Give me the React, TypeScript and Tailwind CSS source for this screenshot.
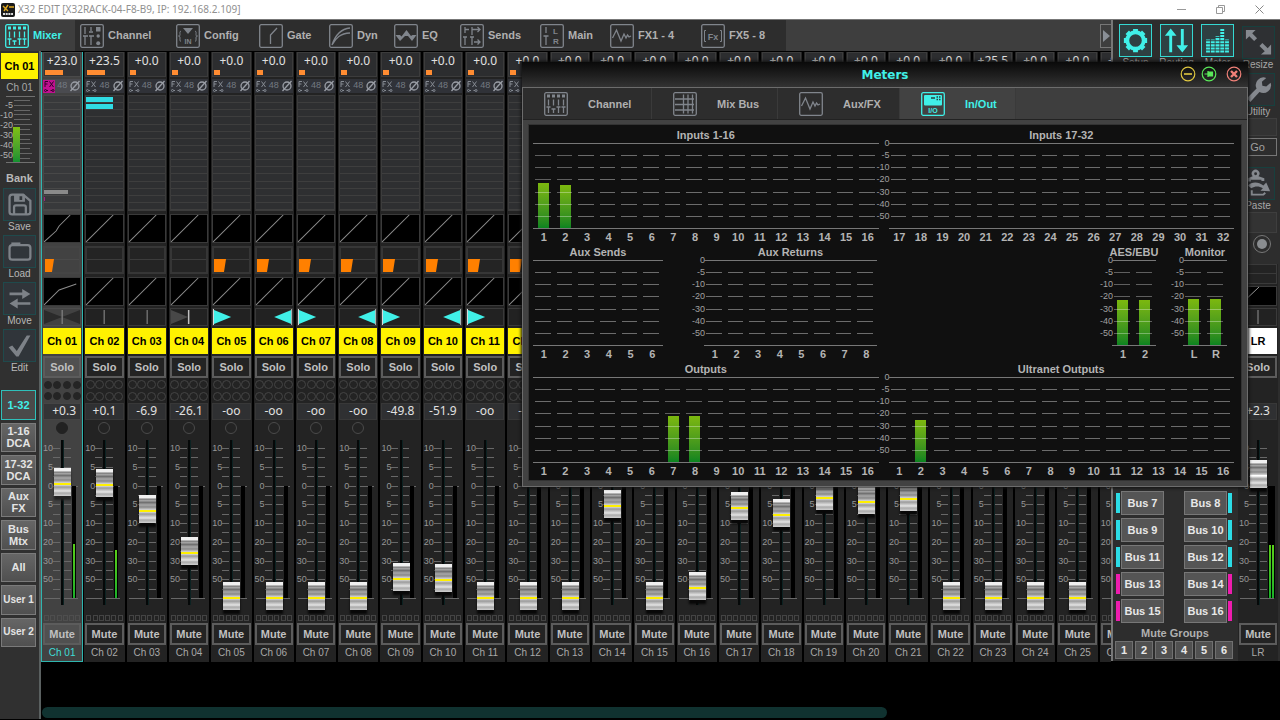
import { useState } from "react";
import type { ReactNode } from "react";
import clsx from "clsx";

type Pan = "center" | "bowtie" | "leftOfCenter" | "left" | "right" | "none";

interface Channel {
    name: string;
    gain: string;
    gainBar: number;
    level: number;
    readout: string;
    lowCut: number;
    pan: Pan;
    meter: number;
}

const OFF = -90;

// Fader law: [dB, travel in px from the bottom stop]
const FADER_LAW = [
    [-90, 0],
    [-50, 19],
    [-30, 38],
    [-20, 57],
    [-10, 75],
    [-5, 94],
    [0, 113],
    [5, 132],
    [10, 150],
];

const dbToTravel = (db: number) => {
    for (let i = 1; i < FADER_LAW.length; i++) {
        const [d0, t0] = FADER_LAW[i - 1];
        const [d1, t1] = FADER_LAW[i];
        if (db <= d1) return Math.round(t0 + ((db - d0) / (d1 - d0)) * (t1 - t0));
    }
    return 150;
};

const LEVELS: Record<number, number> = {
    1: 0.3, 2: 0.1, 3: -6.9, 4: -26.1, 9: -49.8, 10: -51.9, 14: -5.4,
    16: -69, 17: -6.1, 18: -7.9, 19: -3.5, 20: -4.6, 21: -3.8,
};

const formatDb = (db: number) => (db === OFF ? "-oo" : (db > 0 ? "+" : "") + db.toFixed(1));

const panOf = (n: number): Pan => {
    if (n === 1) return "bowtie";
    if (n === 4) return "leftOfCenter";
    if (n < 4) return "center";
    return n % 2 ? "left" : "right";
};

const CHANNELS: Channel[] = Array.from({ length: 26 }, (_, i) => {
    const n = i + 1;
    const level = LEVELS[n] ?? OFF;
    return {
        name: `Ch ${String(n).padStart(2, "0")}`,
        gain: n === 1 ? "+23.0" : n === 2 ? "+23.5" : n === 23 ? "+25.5" : "+0.0",
        gainBar: n <= 2 ? 18 : 6,
        level,
        readout: formatDb(level),
        lowCut: n === 1 ? 9 : n > 4 ? 12 : 0,
        pan: panOf(n),
        meter: n === 1 ? 54 : n === 2 ? 48 : 0,
    };
});

/* ---------- Icons ---------- */

function IconFrame({ children }: { children: ReactNode }) {
    return (
        <svg viewBox="0 0 24 24" className="w-6 h-6 shrink-0" fill="none" stroke="currentColor" strokeWidth="1.3">
            <rect x="0.7" y="0.7" width="22.6" height="22.6" rx="1.5" />
            {children}
        </svg>
    );
}

const MixerIcon = () => (
    <IconFrame>
        <path d="M3 4h3M8 4h3M13 4h3M18 4h3" strokeWidth="3" />
        <path d="M4.5 7.5v6M9.5 7.5v6M14.5 7.5v6M19.5 7.5v6M4.5 15v6M9.5 17v4M14.5 15v6M19.5 15v6M2.5 15h4M7.5 17h4M12.5 15h4M17.5 15h4" />
    </IconFrame>
);

const ChannelIcon = () => (
    <IconFrame>
        <path d="M5 3v7M11 3v4M5 12v9M11 12v9M3 12h5M9 12h5M9 8h4" />
        <rect x="16" y="3" width="4.5" height="4.5" fill="currentColor" stroke="none" />
        <circle cx="18.2" cy="12" r="1.7" fill="currentColor" stroke="none" />
        <circle cx="18.2" cy="19.3" r="2" fill="currentColor" stroke="none" />
    </IconFrame>
);

const ConfigIcon = () => (
    <IconFrame>
        <path d="M7 4h10l-5 6z" fill="currentColor" stroke="none" />
        <path d="M5 7c-1.5.5-1 2-1 3.500S3.500 12 2.500 12c1 0 1.500.5 1.500 2s-.5 3 1 3.500M19 7c1.500.5 1 2 1 3.500s.5 1.500 1.500 1.500c-1 0-1.500.5-1.500 2s.5 3-1 3.500" strokeWidth="1" />
        <text x="12" y="19.5" textAnchor="middle" fontSize="7" fill="currentColor" stroke="none" fontFamily="Liberation Sans, sans-serif">IN</text>
    </IconFrame>
);

const GateIcon = () => (
    <IconFrame>
        <path d="M11.5 20v-9L18 4" />
    </IconFrame>
);

const DynIcon = () => (
    <IconFrame>
        <path d="M3 21C6 12 11 5 21 4M3 21C7 14 11 9.500 21 9" />
    </IconFrame>
);

const EqIcon = () => (
    <IconFrame>
        <path d="M1.500 11h4.500l1.500 1.500L12.500 6l4.500 6 1.500-1H22.500L18 17l-4-5h-3l-5 5z" fill="currentColor" stroke="none" />
    </IconFrame>
);

const SendsIcon = () => (
    <IconFrame>
        <path d="M5 3v6M12 3v8M5 5.500h4M12 5.500h8M17.500 3l2.500 2.500L17.500 8M5 13v8M12 13v8M3 13h4M10 13h4M14 18h6M17.500 15.500L20 18l-2.500 2.500" />
    </IconFrame>
);

const MainIcon = () => (
    <IconFrame>
        <path d="M6 3v6M6 12v9M3.500 12h5" />
        <text x="15.5" y="10" textAnchor="middle" fontSize="8" fill="currentColor" stroke="none" fontFamily="Liberation Sans, sans-serif">L</text>
        <text x="16" y="20" textAnchor="middle" fontSize="8" fill="currentColor" stroke="none" fontFamily="Liberation Sans, sans-serif">R</text>
    </IconFrame>
);

const WaveIcon = () => (
    <IconFrame>
        <path d="M2.500 14l4-8 4.500 11 3-7 2 4 1.500-3 1.500 2 2-1" />
    </IconFrame>
);

const FxIcon = () => (
    <IconFrame>
        <path d="M5 6.500H3.500v11H5M19 6.500h1.500v11H19" strokeWidth="1" />
        <text x="12" y="15.5" textAnchor="middle" fontSize="9" fill="currentColor" stroke="none" fontFamily="Liberation Sans, sans-serif">Fx</text>
    </IconFrame>
);

const MixBusIcon = () => (
    <IconFrame>
        <path d="M2 7h19M2 12.500h19M2 18h19M10.500 2.500v19M15 2.500v19M19.500 2.500v19" />
    </IconFrame>
);

const InOutIcon = () => (
    <IconFrame>
        <rect x="3" y="3" width="18" height="10.5" rx="1" fill="currentColor" stroke="none" />
        <path d="M10 6h4M15.500 5h1.500M18 5h1.500M15.500 7.500h1.500M18 7.500h1.500" stroke="#24403f" />
        <text x="12" y="21" textAnchor="middle" fontSize="7" fill="currentColor" stroke="none" fontFamily="Liberation Sans, sans-serif">I/O</text>
    </IconFrame>
);

const GearIcon = () => (
    <svg viewBox="0 0 32 32" className="w-full h-full" fill="none" stroke="currentColor">
        <circle cx="16" cy="16" r="8.5" strokeWidth="4" />
        <path d="M16 4v4M16 24v4M4 16h4M24 16h4M7.500 7.500l3 3M21.500 21.500l3 3M24.500 7.500l-3 3M10.500 21.500l-3 3" strokeWidth="5" />
    </svg>
);

const RoutingIcon = () => (
    <svg viewBox="0 0 32 32" className="w-full h-full" fill="currentColor">
        <path d="M10 3.500l6 7.500h-4.500v17h-3V11H4zM22 28.500L16 21h4.500V4h3v17H28z" />
    </svg>
);

const MeterIcon = () => (
    <svg viewBox="0 0 32 32" className="w-full h-full" fill="none" stroke="currentColor" strokeWidth="4" strokeDasharray="2.200 1">
        <path d="M6.200 28.500V15M11.100 28.500V15M16 28.500V11.500M20.900 28.500V4M25.800 28.500V15" />
    </svg>
);

const ResizeIcon = () => (
    <svg viewBox="0 0 32 32" className="w-full h-full" fill="currentColor">
        <path d="M3 3h10l-3.500 3.500 5 5-3 3-5-5L3 13zM29 28.500H18.500l4-3.500-5.500-5.500 3-3 5.500 5.500L29 18z" />
    </svg>
);

const WrenchIcon = () => (
    <svg viewBox="0 0 32 32" className="w-full h-full" fill="currentColor">
        <path d="M24 4a8 8 0 0 0-10 11L4 25l3.500 4L17 18.500A8 8 0 0 0 28.500 9L24 13l-4-1-.5-4z" />
    </svg>
);

const PasteIcon = () => (
    <svg viewBox="0 0 32 32" className="w-full h-full" fill="currentColor">
        <path d="M5 10.500l5-2a4 4 0 1 1 6 0l6 2v3h-3v-1.500H8V14H5zM13 4.500a1.500 1.500 0 1 0 0 3 1.500 1.500 0 0 0 0-3z" fillRule="evenodd" />
        <path d="M5 18c4-4 11-4 16 0l3-3 4 9-10-.5 2.500-2.500c-4-2.500-8-2.500-12 0z" />
        <path d="M9 23v4.500h12l2-2" fill="none" stroke="currentColor" strokeWidth="2" />
    </svg>
);

const SaveIcon = () => (
    <svg viewBox="0 0 32 32" className="w-full h-full" fill="none" stroke="currentColor" strokeWidth="2.500">
        <path d="M5 8a3 3 0 0 1 3-3h12l8 7v12a3 3 0 0 1-3 3H8a3 3 0 0 1-3-3z" />
        <path d="M10 27v-8a2 2 0 0 1 2-2h9a2 2 0 0 1 2 2v8" />
        <path d="M10 5h12v8H10zm6 2v4h3V7z" fill="currentColor" fillRule="evenodd" stroke="none" />
    </svg>
);

const FolderIcon = () => (
    <svg viewBox="0 0 32 32" className="w-full h-full" fill="none" stroke="currentColor" strokeWidth="2.500">
        <path d="M5 12a3 3 0 0 1 3-3h17a3 3 0 0 1 3 3v10a3 3 0 0 1-3 3H8a3 3 0 0 1-3-3z" />
        <path d="M7 7.500h10" strokeWidth="3" />
    </svg>
);

const MoveIcon = () => (
    <svg viewBox="0 0 32 32" className="w-full h-full" fill="currentColor">
        <path d="M5 9.500h14V5.500l9 5.500-9 5.500v-4H5zM28 20H14v-4l-9 5.500 9 5.500v-4h14z" />
    </svg>
);

const CheckIcon = () => (
    <svg viewBox="0 0 32 32" className="w-full h-full" fill="currentColor">
        <path d="M4 18l4-2 5 6L24 5h4L15 28h-2.500z" />
    </svg>
);

/* ---------- Channel strip ---------- */

const TICK_LABELS = ["10", "", "5", "", "0", "", "5", "", "10", "", "20", "", "30", "", "50", "", ""];

function CurveBox({ points }: { points: string }) {
    return (
        <div className="h-[29px] border border-[#3a3a3a] bg-black">
            <svg viewBox="0 0 36 27" preserveAspectRatio="none" className="w-full h-full" fill="none" stroke="#8c8c8c">
                <polyline points={points} />
            </svg>
        </div>
    );
}

function EqBox({ lowCut = 0, plain = false }: { lowCut?: number; plain?: boolean }) {
    return (
        <div className={clsx("relative h-7 border-2", plain ? "border-[#454545] bg-[#424242]" : "border-[#363636] bg-[#242424]")}>
            <div className={clsx("h-3 border-b", plain ? "border-[#4a4a4a]" : "border-[#3c3c3c]")} />
            {lowCut > 0 && (
                <svg viewBox="0 0 13 13" className="absolute left-0 bottom-0 w-[13px] h-[13px]" fill="#ff8000">
                    <path d={`M0 0H${lowCut}L${lowCut - 2} 13H0z`} />
                </svg>
            )}
        </div>
    );
}

function PanBox({ pan, selected }: { pan: Pan; selected?: boolean }) {
    return (
        <div className={clsx("h-[18px] border flex items-center relative", selected ? "border-[#4c4c4c]" : "border-[#3a3a3a] bg-[#222]")}>
            <svg viewBox="0 0 36 16" preserveAspectRatio="none" className="w-full h-full">
                {pan === "bowtie" && <path d="M0 1l18 7L0 15zM36 1L18 8l18 7z" fill="#2b2b2b" />}
                {pan === "leftOfCenter" && <path d="M0 1l17 7-17 7z" fill="#484848" />}
                {pan === "left" && <path d="M1 1l17 7-17 7z" fill="#40f0e8" />}
                {pan === "right" && <path d="M35 1L18 8l17 7z" fill="#40f0e8" />}
                {(pan === "center" || pan === "bowtie") && <path d="M18 1v14" stroke="#909090" />}
                {pan === "leftOfCenter" && <path d="M17.500 1v14" stroke="#c0c0c0" strokeWidth="1.500" />}
                {pan === "left" && <path d="M.5 0v16" stroke="#d8d8d8" />}
                {pan === "right" && <path d="M35.500 0v16" stroke="#d8d8d8" />}
            </svg>
        </div>
    );
}

function Fader({ label, level, meter, main, selected }: { label: string; level: number; meter: number[]; main?: boolean; selected?: boolean }) {
    const [travel, setTravel] = useState(dbToTravel(level));
    return (
        <div className="relative h-[178px] pt-[9px]">
            <div className="h-[159px] flex flex-col justify-between">
                {TICK_LABELS.map((text, i) => (
                    <div key={i} className="h-[9px] flex items-center text-[9px] leading-[9px] text-[#969696]">
                        {i < 16 && <span className="w-[10px] text-right">{text}</span>}
                        <span className={clsx("h-px bg-[#686868]", i === 16 ? "w-4 ml-px" : "w-[7px]")} />
                        <span className={clsx("h-px bg-[#686868] ml-[4px]", i === 16 || i === 4 ? "w-[14px]" : "w-[7px]")} />
                    </div>
                ))}
            </div>
            {/* Slot and side meter lie over the scale */}
            <div className="absolute left-1/2 -ml-[1px] top-[5px] w-[3px] h-[165px] bg-[#050808] border-r border-[#0c2222]" />
            <div className="absolute left-[29px] top-[51px] h-[112px] flex items-end gap-px bg-black px-px">
                {meter.map((h, i) => (
                    <div key={i} className="w-[2px] bg-gradient-to-b from-[#58d018] to-[#18b028]" style={{ height: h }} />
                ))}
            </div>
            <input
                type="range"
                min={0}
                max={150}
                value={travel}
                aria-label={`${label} fader`}
                onChange={(e) => setTravel(Number(e.target.value))}
                className={clsx(
                    "absolute left-1/2 -ml-2 -top-[3px] w-[17px] h-[178px] m-0 appearance-none bg-transparent [writing-mode:vertical-lr] [direction:rtl]",
                    "[&::-webkit-slider-thumb]:appearance-none [&::-webkit-slider-thumb]:w-[17px] [&::-webkit-slider-thumb]:h-[28px]",
                    selected
                        ? "[&::-webkit-slider-thumb]:shadow-[0_4px_2px_#222]"
                        : "[&::-webkit-slider-thumb]:shadow-[0_4px_2px_#080808]",
                    main
                        ? "[&::-webkit-slider-thumb]:bg-[linear-gradient(#f0f0f0_0_3px,#777_4px,#b0b0b0_6px,#666_7px,#a8a8a8_10px,#888_12px,#d8d8d8_15px,#fff_15px_16px,#d8d8d8_17px,#9a9a9a_19px,#e4e4e4_23px,#aaa_25px,#d0d0d0_28px)]"
                        : "[&::-webkit-slider-thumb]:bg-[linear-gradient(#f0f0f0_0_3px,#777_4px,#b0b0b0_6px,#666_7px,#a8a8a8_10px,#888_12px,#d8d8d8_15px,#fff000_15px_17px,#d8d8d8_17px,#9a9a9a_19px,#e4e4e4_23px,#aaa_25px,#d0d0d0_28px)]"
                )}
            />
        </div>
    );
}

const STRIP_BUTTON = "block w-full h-[22px] border-2 text-[11px] leading-[18px] font-bold text-center text-[#c0c0c0] whitespace-nowrap";

function ChannelStrip({ channel, index, selected, onSelect }: { channel: Channel; index: number; selected: boolean; onSelect: () => void }) {
    const first = index === 0;
    return (
        <div className={clsx("border-x px-px min-w-0 overflow-hidden", selected ? "bg-[#424242] border-[#2fb5af] border-b" : "bg-[#232323] border-black")}>
            <div className={clsx("h-[25px] border px-px", selected ? "bg-[#333436] border-[#4a4a4a]" : "bg-[#2c2d2f] border-[#3c3c3c]")}>
                <div className="h-[17px] leading-4 text-center text-[12px] text-[#e0e0e0] font-['Noto_Sans',sans-serif]">{channel.gain}</div>
                <div className="h-[5px] bg-[#ff8c32]" style={{ width: channel.gainBar }} />
            </div>
            <div className={clsx("mt-0.5 h-[14px] flex items-center justify-between text-[9px] text-[#747a82]", selected ? "bg-[#4a4b50]" : "bg-[#303238]")}>
                <svg viewBox="0 0 12 13" className={clsx("w-3 h-[13px]", first ? "bg-[#c01090] text-[#300028]" : "text-[#858a92]")} fill="none" stroke="currentColor">
                    <path d="M2 7V1.500h3M2 4h2.500M6.500 1.500l4 5.500M10.500 1.500l-4 5.500M3.500 10.500H5M7.500 10.500H9" />
                    <circle cx="2.5" cy="10.5" r="1" />
                    <circle cx="10" cy="10.5" r="1" />
                </svg>
                <span>48</span>
                <svg viewBox="0 0 12 12" className="w-3 h-3" fill="none" stroke="#9a9ea6" strokeWidth="1.300">
                    <circle cx="6" cy="6" r="4" />
                    <path d="M1.500 11l9-10" />
                </svg>
            </div>
            {/* 16 bus sends */}
            <div className={clsx("mt-0.5 h-[116px] flex flex-col border", selected ? "bg-[#38393b] border-[#484848]" : "bg-[#2e2f31] border-[#3c3c3c]")}>
                {Array.from({ length: 16 }, (_, i) => (
                    <div key={i} className={clsx("flex-1 border-b flex items-center", selected ? "border-[#484848]" : "border-[#3e3e3e]")}>
                        {index === 1 && i < 2 && <div className="w-[27px] h-[5px] bg-[#30dce4]" />}
                        {first && i === 13 && <div className="w-[24px] h-1 bg-[#8a8a8a]" />}
                        {first && i === 14 && <div className="w-px h-1 bg-[#a02080]" />}
                    </div>
                ))}
            </div>
            <div className="mt-[3px]">
                <CurveBox points={first ? "0,27 12,16 15,11 26,0" : "0,27 27,0"} />
            </div>
            <div className="mt-[3px]">
                <EqBox lowCut={channel.lowCut} plain={first} />
            </div>
            <div className="mt-[3px]">
                <CurveBox points={first ? "0,27 15,12 32,6" : "0,27 27,0"} />
            </div>
            <div className="mt-0.5">
                <PanBox pan={channel.pan} selected={selected} />
            </div>
            <button
                onClick={onSelect}
                className="block w-full mt-0.5 h-[26px] bg-[#fff200] text-black text-[11px] font-bold whitespace-nowrap overflow-hidden"
            >
                {channel.name}
            </button>
            <button className={clsx("mt-0.5 border-[#5c5c5c]", STRIP_BUTTON, selected ? "bg-[#505050]" : "bg-[#232323]")}>Solo</button>
            <div className="mt-px h-[23px] grid grid-cols-4 gap-y-[2px] place-items-center py-px">
                {Array.from({ length: 8 }, (_, i) => (
                    <span key={i} className={clsx("rounded-full border", selected ? "w-2 h-2 bg-[#242424] border-[#242424]" : "w-[9px] h-[9px] border-[#444]")} />
                ))}
            </div>
            <output className={clsx("block mt-px h-[17px] leading-[14px] border text-center text-[12px] text-[#e0e0e0] font-['Noto_Sans',sans-serif]", selected ? "bg-[#333436] border-[#454545] pl-1" : "bg-[#2f3032] border-[#383838]")}>
                {channel.readout}
            </output>
            <div className="h-[15px] flex items-center justify-center">
                {index < 8 && <span className={clsx("w-3 h-3 rounded-full border", selected ? "bg-[#222] border-[#222]" : "border-[#4a4a4a]")} />}
            </div>
            <Fader label={channel.name} level={channel.level} meter={[channel.meter]} selected={selected} />
            <div className="h-[10px] flex justify-between items-center px-px">
                {Array.from({ length: 6 }, (_, i) => (
                    <span key={i} className={clsx("w-[5px] h-[6px] border", selected ? "border-[#4e4e4e]" : "border-[#444]")} />
                ))}
            </div>
            <button className={clsx("border-[#5c5c5c]", STRIP_BUTTON, selected ? "bg-[#505050]" : "bg-[#232323]")}>Mute</button>
            <div className={clsx("h-4 leading-4 text-center text-[10px] whitespace-nowrap", selected ? "text-[#3fdcd6]" : "text-[#a8a8a8]")}>{channel.name}</div>
        </div>
    );
}

/* ---------- Sidebar ---------- */

const TOOLS = [
    { label: "Save", icon: <SaveIcon /> },
    { label: "Load", icon: <FolderIcon /> },
    { label: "Move", icon: <MoveIcon /> },
    { label: "Edit", icon: <CheckIcon /> },
];

const BANKS = ["1-32", "1-16 DCA", "17-32 DCA", "Aux FX", "Bus Mtx", "All", "User 1", "User 2"];
const SIDE_SCALE = ["-5", "-10", "-20", "-30", "-40", "-50"];

function Sidebar() {
    const [bank, setBank] = useState("1-32");
    return (
        <aside className="w-[41px] shrink-0 bg-[#303030] border-r-2 border-[#5a6060] pr-px pt-0.5 pl-px mb-px">
            <div className="h-[26px] leading-[26px] bg-[#fff200] text-black text-[11px] font-bold text-center">Ch 01</div>
            <div className="h-[17px] leading-[18px] text-[10px] text-[#a8a8a8] text-center">Ch 01</div>
            <div className="relative h-[67px] ml-[5px] mr-[3px] border-y border-[#707070]">
                <div className="h-full flex flex-col justify-between py-[3px] pl-2">
                    {Array.from({ length: 13 }, (_, i) => (
                        <div key={i} className={clsx("h-px bg-[#666]", i % 2 ? "w-[18px]" : "w-[16px]")} />
                    ))}
                </div>
                <div className="absolute left-[7px] bottom-0 w-[7px] h-[35px] bg-gradient-to-b from-[#7fc010] to-[#109030]" />
                <div className="absolute -left-[6px] top-[3px] w-[13px] h-[58px] flex flex-col justify-between items-end text-[9px] leading-[10px] text-[#b0b0b0]">
                    {SIDE_SCALE.map((s) => (
                        <span key={s}>{s}</span>
                    ))}
                </div>
            </div>
            <div className="h-6 leading-[30px] text-[11px] font-bold text-[#b8b8b8] text-center">Bank</div>
            {TOOLS.map((tool) => (
                <button key={tool.label} className="block w-full h-[47px] text-center text-[10px] leading-[12px] text-[#b8b8b8]">
                    <span className="block mx-auto w-[33px] h-[33px] border border-[#1f4a4c] bg-[#30353a] text-[#7d8288] p-px">{tool.icon}</span>
                    {tool.label}
                </button>
            ))}
            <div className="mt-[15px] h-[257px] flex flex-col gap-[3px]">
                {BANKS.map((b) => (
                    <button
                        key={b}
                        onClick={() => setBank(b)}
                        className={clsx(
                            "flex-1 min-h-0 w-[35px] border leading-3 font-bold overflow-hidden",
                            b === bank ? "border-[#2fc0ba] bg-[#4a4a4a] text-[#40f0e8]" : "border-[#7a7a7a] bg-gradient-to-b from-[#666] to-[#505050] text-[#e4e4e4]",
                            b.startsWith("User") ? "text-[10px] whitespace-nowrap" : "text-[11px]"
                        )}
                    >
                        {b}
                    </button>
                ))}
            </div>
        </aside>
    );
}

/* ---------- Top tabs ---------- */

const TABS = [
    { label: "Mixer", icon: <MixerIcon />, width: "w-[75px]" },
    { label: "Channel", icon: <ChannelIcon />, width: "w-[96px]" },
    { label: "Config", icon: <ConfigIcon />, width: "w-[83px]" },
    { label: "Gate", icon: <GateIcon />, width: "w-[70px]" },
    { label: "Dyn", icon: <DynIcon />, width: "w-[65px]" },
    { label: "EQ", icon: <EqIcon />, width: "w-[66px]" },
    { label: "Sends", icon: <SendsIcon />, width: "w-[80px]" },
    { label: "Main", icon: <MainIcon />, width: "w-[70px]" },
    { label: "FX1 - 4", icon: <WaveIcon />, width: "w-[91px]" },
    { label: "FX5 - 8", icon: <FxIcon />, width: "w-[90px]" },
];

function TabBar() {
    const [tab, setTab] = useState("Mixer");
    return (
        <nav className="h-8 shrink-0 flex bg-[#3e3e3e] border-t border-[#777]">
            {TABS.map((t) => (
                <button
                    key={t.label}
                    onClick={() => setTab(t.label)}
                    className={clsx(
                        "flex items-center gap-1 pl-[5px] shrink-0 text-[11px] font-bold whitespace-nowrap",
                        t.width,
                        tab === t.label ? "bg-[#3e3e3e] text-[#40f0e8]" : "bg-[#2d2d2d] text-[#b0b0b0] [&_svg]:text-[#80858c]"
                    )}
                >
                    {t.icon}
                    {t.label}
                </button>
            ))}
            <button aria-label="More tabs" className="ml-auto mt-1 w-[11px] h-6 border border-r-0 border-[#777]">
                <svg viewBox="0 0 10 22" className="w-full h-full" fill="#8a8f96">
                    <path d="M2 5l7 6-7 6z" />
                </svg>
            </button>
        </nav>
    );
}

/* ---------- Right panel ---------- */

const VIEW_BUTTONS = [
    { label: "Setup", icon: <GearIcon /> },
    { label: "Routing", icon: <RoutingIcon /> },
    { label: "Meter", icon: <MeterIcon /> },
];

function ToolButton({ label, children }: { label: string; children: ReactNode }) {
    return (
        <button className="block w-full h-[47px] text-center text-[10px] leading-[11px] text-[#a8a8a8]">
            <span className="block mx-auto w-[33px] h-[33px] border border-[#17403e] bg-[#2e3033] text-[#85898f]">{children}</span>
            {label}
        </button>
    );
}

function RightPanel() {
    return (
        <aside className="w-[169px] h-[642px] shrink-0 flex bg-[#2d2d2d] border-t border-[#777] text-[#b0b0b0]">
            <div className="flex-1 border-l-2 border-[#777] pt-1 flex flex-col">
                <div className="flex gap-2 pl-1.5">
                    {VIEW_BUTTONS.map((b) => (
                        <button key={b.label} className="text-[10px] leading-[11px] w-[33px] flex flex-col items-center">
                            <span className="block w-[33px] h-[33px] border border-[#35d8d2] bg-[#2e4042] text-[#40f0e8]">{b.icon}</span>
                            {b.label}
                        </button>
                    ))}
                </div>
                <div className="mt-auto grid grid-cols-2 gap-x-[20px] gap-y-[3px] pl-[3px] pr-[5px]">
                    {[7, 8, 9, 10, 11, 12, 13, 14, 15, 16].map((n) => (
                        <div key={n} className={clsx("flex items-center gap-px", n % 2 === 0 && "flex-row-reverse")}>
                            <span className={clsx("w-[4px] h-[20px]", n < 13 ? "bg-[#2cdce6]" : "bg-[#ee1cae]")} />
                            <button className="flex-1 h-6 border border-[#777] bg-[#555] text-[#e8e8e8] text-[11px] font-bold whitespace-nowrap">Bus {n}</button>
                        </div>
                    ))}
                </div>
                <div className="h-[18px] leading-5 text-[11px] font-bold text-center">Mute Groups</div>
                <div className="flex gap-0.5 pl-0.5 pb-0.5">
                    {[1, 2, 3, 4, 5, 6].map((n) => (
                        <button key={n} className="w-[18px] h-[18px] border border-[#707070] bg-[#505050] text-[#e8e8e8] text-[11px] leading-4 font-bold">{n}</button>
                    ))}
                </div>
            </div>
            <div className="w-[43px] pl-px pr-0.5">
                <div className="pt-1">
                    <ToolButton label="Resize"><ResizeIcon /></ToolButton>
                    <ToolButton label="Utility"><WrenchIcon /></ToolButton>
                </div>
                <div className="h-[18px] border border-[#3e3e3e] bg-[#333] mr-px" />
                <button className="block mt-0.5 w-[39px] h-[18px] border border-[#777] text-[11px] leading-4 text-[#a0a0a0]">Go</button>
                <div className="mt-[9px]">
                    <ToolButton label="Paste"><PasteIcon /></ToolButton>
                </div>
                <div className="h-[21px] border border-[#3e3e3e] bg-[#333] mr-px" />
                <button aria-label="Record" className="block mt-[2px] ml-[15px] w-[18px] h-[18px] rounded-full border border-[#777] p-[3px]">
                    <span className="block w-[10px] h-[10px] rounded-full bg-[#8a8d90]" />
                </button>
                <div className="mt-[11px] bg-[#232323] px-px">
                    <div className="h-5 border border-[#3a3a3a]">
                        <div className="h-[9px] border-b border-[#3a3a3a]" />
                    </div>
                    <div className="mt-0.5 h-5 bg-black border border-[#3a3a3a]">
                        <svg viewBox="0 0 36 18" preserveAspectRatio="none" className="w-full h-full" fill="none" stroke="#999">
                            <path d="M0 18L19 0" />
                        </svg>
                    </div>
                    <div className="mt-0.5">
                        <PanBox pan="center" />
                    </div>
                    <div className="mt-0.5 h-[26px] leading-[26px] bg-white text-black text-[11px] font-bold text-center">LR</div>
                    <button className={clsx("mt-0.5 border-[#5c5c5c]", STRIP_BUTTON)}>Solo</button>
                    <output className="block mt-[25px] h-[17px] leading-[14px] border border-[#383838] bg-[#2f3032] text-center text-[12px] text-[#e0e0e0] font-['Noto_Sans',sans-serif]">
                        +2.3
                    </output>
                    <div className="h-[15px]" />
                    <Fader label="LR" level={2.3} meter={[53, 53]} main />
                    <button className={clsx("mt-[10px] border-[#5c5c5c]", STRIP_BUTTON)}>Mute</button>
                    <div className="h-4 leading-4 text-center text-[10px] text-[#a8a8a8]">LR</div>
                </div>
            </div>
        </aside>
    );
}

/* ---------- Meters window ---------- */

const SCALE = ["0", "-5", "-10", "-20", "-30", "-40", "-50", ""];

function MeterScale() {
    return (
        <div className="w-3 -mx-px shrink-0 pt-[10px] flex flex-col">
            <div className="h-[96px] flex flex-col justify-between items-end text-[9px] leading-[11px] text-[#a0a0a0]">
                {SCALE.map((s, i) => (
                    <span key={i} className="h-[11px]">{s}</span>
                ))}
            </div>
        </div>
    );
}

function MeterGroup({ title, labels, bars = {}, width }: { title: string; labels: string[]; bars?: Record<string, number>; width: string }) {
    return (
        <section className={clsx("min-w-0", width)}>
            <h3 className="h-[15px] leading-[15px] flex justify-center text-[11px] font-bold text-[#b4b4b4] whitespace-nowrap">{title}</h3>
            <div className="flex border-y border-[#777]">
                {labels.map((l) => (
                    <div key={l} className="relative flex-1 h-[84px]">
                        {bars[l] && (
                            <div
                                className="absolute left-[5px] bottom-0 w-[11px] bg-gradient-to-b from-[#7cb80e] to-[#088420]"
                                style={{ height: bars[l] }}
                            />
                        )}
                        <div className="relative h-full flex flex-col justify-between py-[11px] pl-0.5 pr-[4px]">
                            {Array.from({ length: 6 }, (_, i) => (
                                <div key={i} className={clsx("h-px", bars[l] ? "bg-[#ffffff55]" : "bg-[#6c6c6c]")} />
                            ))}
                        </div>
                    </div>
                ))}
            </div>
            <div className="flex h-4 leading-[17px] text-[11px] font-bold text-[#b4b4b4]">
                {labels.map((l) => (
                    <span key={l} className="flex-1 basis-0 min-w-0 flex justify-center">{l}</span>
                ))}
            </div>
        </section>
    );
}

const range = (from: number, to: number) => Array.from({ length: to - from + 1 }, (_, i) => String(from + i));

const METER_TABS = [
    { label: "Channel", icon: <MixerIcon />, width: "w-[129px]" },
    { label: "Mix Bus", icon: <MixBusIcon />, width: "w-[126px]" },
    { label: "Aux/FX", icon: <WaveIcon />, width: "w-[122px]" },
    { label: "In/Out", icon: <InOutIcon />, width: "w-[116px]" },
];

function MetersWindow() {
    return (
        <div role="dialog" aria-label="Meters" className="absolute left-[522px] right-8 top-[62px] shadow-[0_0_3px_1px_#111]">
            <header className="relative h-[25px] bg-gradient-to-b from-[#0a0a0a] to-[#333] flex items-center justify-center">
                <h2 className="text-[12px] font-bold text-[#40f0e8] font-['DejaVu_Sans',sans-serif]">Meters</h2>
                <div className="absolute right-[6px] top-1 flex gap-[5px]">
                    <button aria-label="Minimize" className="text-[#e0c840]">
                        <svg viewBox="0 0 16 16" className="w-4 h-4" fill="none" stroke="currentColor" strokeWidth="1.200">
                            <circle cx="8" cy="8" r="6.8" />
                            <path d="M4 8h8" strokeWidth="1.600" />
                        </svg>
                    </button>
                    <button aria-label="Pin" className="text-[#5ae85a]">
                        <svg viewBox="0 0 16 16" className="w-4 h-4" fill="none" stroke="currentColor" strokeWidth="1.200">
                            <circle cx="8" cy="8" r="6.8" />
                            <path d="M3.500 8H7M7 5v6" />
                            <path d="M7.500 6h4v4h-4z" fill="currentColor" />
                        </svg>
                    </button>
                    <button aria-label="Close" className="ml-1 text-[#f08078]">
                        <svg viewBox="0 0 16 16" className="w-4 h-4" fill="none" stroke="currentColor" strokeWidth="1.200">
                            <circle cx="8" cy="8" r="6.8" />
                            <path d="M5 5l6 6M11 5l-6 6" strokeWidth="2.400" />
                        </svg>
                    </button>
                </div>
            </header>
            <div className="border border-[#6c6c6c] bg-[#424242] pb-[5px]">
                <div className="flex h-8 border-b border-[#222] bg-[#3e3e3e]">
                    {METER_TABS.map((t) => (
                        <button
                            key={t.label}
                            className={clsx(
                                "pl-[21px] pt-px flex items-center gap-5 text-[11px] font-bold border-r border-[#3a3a3a]",
                                t.width,
                                t.label === "In/Out" ? "bg-[#424242] text-[#40f0e8]" : "bg-[#2d2d2d] text-[#b0b0b0] [&_svg]:text-[#80858c]"
                            )}
                        >
                            {t.icon}
                            {t.label}
                        </button>
                    ))}
                </div>
                <div className="mt-[4px] mx-[5px] bg-[#101010] pt-[3px] pl-1 pr-[7px] pb-px border border-[#333]">
                    <div className="flex">
                        <MeterGroup title="Inputs 1-16" labels={range(1, 16)} bars={{ 1: 45, 2: 43 }} width="flex-1" />
                        <MeterScale />
                        <MeterGroup title="Inputs 17-32" labels={range(17, 32)} width="flex-1" />
                    </div>
                    <div className="flex">
                        <MeterGroup title="Aux Sends" labels={range(1, 6)} width="w-[130px]" />
                        <div className="w-[31px]" />
                        <MeterScale />
                        <MeterGroup title="Aux Returns" labels={range(1, 8)} width="w-[173px]" />
                        <div className="flex-1" />
                        <MeterScale />
                        <MeterGroup title="AES/EBU" labels={["1", "2"]} bars={{ 1: 45, 2: 45 }} width="w-[44px]" />
                        <div className="w-[17px]" />
                        <MeterScale />
                        <MeterGroup title="Monitor" labels={["L", "R"]} bars={{ L: 46, R: 46 }} width="w-[44px] mr-[7px]" />
                    </div>
                    <div className="flex">
                        <MeterGroup title="Outputs" labels={range(1, 16)} bars={{ 7: 46, 8: 46 }} width="flex-1" />
                        <MeterScale />
                        <MeterGroup title="Ultranet Outputs" labels={range(1, 16)} bars={{ 2: 42 }} width="flex-1" />
                    </div>
                </div>
            </div>
        </div>
    );
}

/* ---------- App ---------- */

function TitleBar() {
    return (
        <header className="h-[19px] shrink-0 bg-white flex items-center text-[#909090]">
            <svg viewBox="0 0 14 14" className="ml-px w-[14px] h-[14px]">
                <rect width="14" height="14" rx="2" fill="#1a1a1a" />
                <path d="M2 3l5 5M7 2L3 8M8 4h5" stroke="#e0a820" strokeWidth="1.400" />
                <path d="M2 11h10" stroke="#ddd" strokeWidth="2" strokeDasharray="2 .7" />
            </svg>
            <h1 className="ml-[3px] text-[10px] font-['Noto_Sans',sans-serif]">X32 EDIT [X32RACK-04-F8-B9, IP: 192.168.2.109]</h1>
            <div className="ml-auto flex gap-[30px] pr-4">
                <button aria-label="Minimize window">
                    <svg viewBox="0 0 9 9" className="w-[9px] h-[9px]" stroke="#999" fill="none"><path d="M0 4.500h9" /></svg>
                </button>
                <button aria-label="Restore window">
                    <svg viewBox="0 0 9 9" className="w-[9px] h-[9px]" stroke="#999" fill="none"><path d="M.5 2.500h6v6h-6zM2.500 2.500v-2h6v6h-2" /></svg>
                </button>
                <button aria-label="Close window">
                    <svg viewBox="0 0 9 9" className="w-[9px] h-[9px]" stroke="#888" fill="none"><path d="M.5.5l8 8M8.500.5l-8 8" /></svg>
                </button>
            </div>
        </header>
    );
}

export default function App() {
    const [selected, setSelected] = useState(0);
    return (
        <div className="relative h-screen min-h-[720px] flex flex-col bg-black overflow-hidden font-['Liberation_Sans',Arial,sans-serif]">
            <TitleBar />
            <div className="flex-1 flex items-start min-h-0">
                <div className="flex-1 min-w-0 h-full flex flex-col">
                    <TabBar />
                    <div className="flex-1 flex min-h-0">
                        <Sidebar />
                        <main className="flex-1 min-w-0 flex flex-col overflow-hidden pt-px">
                            <div className="w-[102.8%] grid grid-cols-[repeat(26,minmax(0,1fr))]">
                                {CHANNELS.map((c, i) => (
                                    <ChannelStrip key={c.name} channel={c} index={i} selected={i === selected} onSelect={() => setSelected(i)} />
                                ))}
                            </div>
                            <div className="mt-auto mb-0.5 h-[11px] ml-px w-[79%] rounded-full bg-[#103230]" />
                        </main>
                    </div>
                </div>
                <RightPanel />
            </div>
            <MetersWindow />
        </div>
    );
}
